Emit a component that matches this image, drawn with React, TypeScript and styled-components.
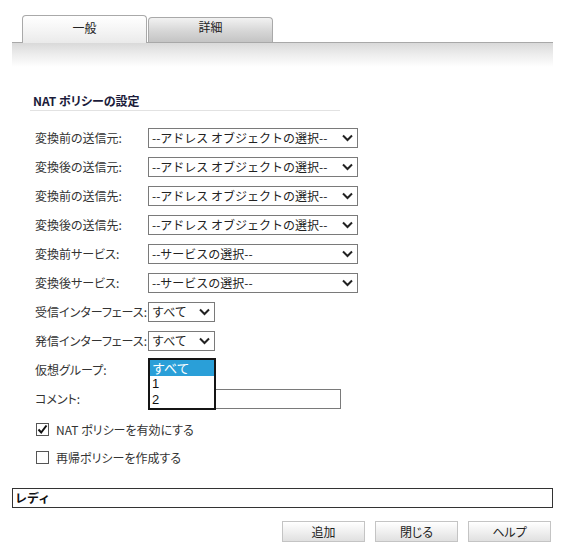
import React from "react";
import styled, { createGlobalStyle } from "styled-components";

const Global = createGlobalStyle`
  html, body { margin: 0; padding: 0; background: #fff; }
  body { font-family: "Noto Sans CJK JP", "Liberation Sans", sans-serif; font-size: 12px; color: #333; }
`;

const Page = styled.div`
  width: 563px;
  height: 553px;
  position: relative;
  overflow: hidden;
`;

const TabStrip = styled.div`
  margin: 14px 10px 0 12px;
  padding-left: 10px;
  display: flex;
  align-items: flex-end;
  gap: 1px;
  height: 28px;
  border-bottom: 1px solid #a8a8a8;
`;

const Tab = styled.div<{ $active?: boolean }>`
  width: 125px;
  height: ${(p) => (p.$active ? 28 : 25)}px;
  box-sizing: border-box;
  border: 1px solid #a9a9a9;
  border-bottom: none;
  border-radius: 4px 4px 0 0;
  background: ${(p) =>
    p.$active
      ? "linear-gradient(#ffffff, #f3f3f3 60%, #eaeaea)"
      : "linear-gradient(#f2f2f2, #d6d6d6 55%, #c4c4c4)"};
  display: flex;
  justify-content: center;
  padding-top: ${(p) => (p.$active ? 4 : 1)}px;
  font-size: 12px;
  color: #222;
  line-height: 16px;
  margin-bottom: ${(p) => (p.$active ? -1 : 0)}px;
  position: relative;
`;

const Band = styled.div`
  margin: 0 10px 0 12px;
  height: 24px;
  background: linear-gradient(#d9d9d9, #ececec 45%, #ffffff);
`;

const Section = styled.div`
  padding: 26px 0 0 30px;
`;

const Heading = styled.div`
  width: 307px;
  font-weight: bold;
  font-size: 12px;
  color: #1b1b3a;
  padding: 0 0 1px 3px;
  line-height: 16px;
  border-bottom: 1px solid #e2e2e2;
  font-feature-settings: "palt";
`;

const Form = styled.div`
  margin-top: 12px;
  padding-left: 5px;
  display: flex;
  flex-direction: column;
`;

const Row = styled.div`
  height: 29px;
  display: grid;
  grid-template-columns: 113px auto;
  align-items: center;
  position: relative;
`;

const Label = styled.span`
  font-size: 12px;
  color: #333;
  white-space: nowrap;
  font-feature-settings: "palt";
`;

const SelectBox = styled.div<{ $w: number; $open?: boolean }>`
  width: ${(p) => p.$w}px;
  height: 20px;
  box-sizing: border-box;
  border: 1px solid #7a7a7a;
  background: #fff;
  display: flex;
  align-items: center;
  justify-content: space-between;
  padding: 0 4px 0 3px;
  font-size: 12px;
  color: #222;
  white-space: nowrap;
  visibility: ${(p) => (p.$open ? "hidden" : "visible")};
`;

const TextInput = styled.div`
  width: 193px;
  height: 20px;
  box-sizing: border-box;
  border: 1px solid #7a7a7a;
  background: #fff;
`;

const DropList = styled.div`
  position: absolute;
  left: 113px;
  top: 3px;
  width: 68px;
  box-sizing: border-box;
  border: 2px solid #151515;
  background: #fff;
  z-index: 2;
`;

const DropItem = styled.div<{ $sel?: boolean }>`
  height: 16px;
  line-height: 16px;
  padding-left: 2px;
  font-size: 13px;
  background: ${(p) => (p.$sel ? "#2a9fd8" : "#fff")};
  color: ${(p) => (p.$sel ? "#fff" : "#111")};
  font-family: ${(p) => (p.$sel ? `"Noto Sans CJK JP", sans-serif` : `"Liberation Sans", sans-serif`)};
`;

const CheckRow = styled.label`
  height: 28px;
  display: flex;
  align-items: center;
  gap: 7px;
  padding-left: 1px;
  font-size: 12px;
  color: #333;
  font-feature-settings: "palt";
`;

const CheckBox = styled.span`
  width: 13px;
  height: 13px;
  box-sizing: border-box;
  border: 1px solid #555;
  background: #fff;
  display: flex;
  align-items: center;
  justify-content: center;
`;

const ChecksBlock = styled.div`
  margin-top: 2px;
  display: flex;
  flex-direction: column;
`;

const Status = styled.div`
  margin: 17px 10px 0 12px;
  height: 20px;
  box-sizing: border-box;
  border: 1px solid #333;
  font-weight: bold;
  font-size: 12px;
  color: #111;
  line-height: 18px;
  padding-left: 2px;
`;

const Buttons = styled.div`
  display: flex;
  justify-content: flex-end;
  gap: 10px;
  margin: 13px 12px 0 0;
`;

const Button = styled.button`
  width: 83px;
  height: 21px;
  box-sizing: border-box;
  border: 1px solid #c4c4c4;
  background: linear-gradient(#ffffff, #f0f0f0 50%, #e0e0e0);
  font-family: "Noto Sans CJK JP", sans-serif;
  font-size: 12px;
  color: #222;
  padding: 0;
  font-feature-settings: "palt";
`;

const Chevron = () => (
  <svg width="11" height="8" viewBox="0 0 11 8">
    <path d="M1 1.5 L5.5 6 L10 1.5" fill="none" stroke="#222" strokeWidth="2" />
  </svg>
);

const Check = () => (
  <svg width="11" height="11" viewBox="0 0 11 11">
    <path d="M1.5 5.5 L4.2 8.5 L9.5 1.5" fill="none" stroke="#111" strokeWidth="2" />
  </svg>
);

const addr = "--アドレス オブジェクトの選択--";
const svc = "--サービスの選択--";

const selectRows: [string, string, number][] = [
  ["変換前の送信元:", addr, 210],
  ["変換後の送信元:", addr, 210],
  ["変換前の送信先:", addr, 210],
  ["変換後の送信先:", addr, 210],
  ["変換前サービス:", svc, 210],
  ["変換後サービス:", svc, 210],
  ["受信インターフェース:", "すべて", 67],
  ["発信インターフェース:", "すべて", 67],
];

export default function App() {
  return (
    <Page>
      <Global />
      <TabStrip>
        <Tab $active>一般</Tab>
        <Tab>詳細</Tab>
      </TabStrip>
      <Band />
      <Section>
        <Heading>NAT ポリシーの設定</Heading>
        <Form>
          {selectRows.map(([l, v, w], i) => (
            <Row key={i}>
              <Label>{l}</Label>
              <SelectBox $w={w}>
                <span>{v}</span>
                <Chevron />
              </SelectBox>
            </Row>
          ))}
          <Row>
            <Label>仮想グループ:</Label>
            <SelectBox $w={67} $open aria-hidden="true" />
            <DropList>
              <DropItem $sel>すべて</DropItem>
              <DropItem>1</DropItem>
              <DropItem>2</DropItem>
            </DropList>
          </Row>
          <Row>
            <Label>コメント:</Label>
            <TextInput />
          </Row>
          <ChecksBlock>
            <CheckRow>
              <CheckBox>
                <Check />
              </CheckBox>
              NAT ポリシーを有効にする
            </CheckRow>
            <CheckRow>
              <CheckBox />
              再帰ポリシーを作成する
            </CheckRow>
          </ChecksBlock>
        </Form>
      </Section>
      <Status>レディ</Status>
      <Buttons>
        <Button>追加</Button>
        <Button>閉じる</Button>
        <Button>ヘルプ</Button>
      </Buttons>
    </Page>
  );
}
